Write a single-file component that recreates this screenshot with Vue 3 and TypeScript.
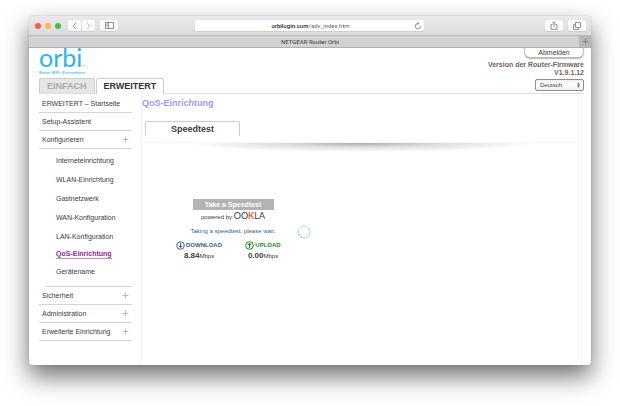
<script setup lang="ts">
import { ref } from 'vue'

interface MenuItem {
  label: string
  expandable?: boolean
}

const topItems: MenuItem[] = [
  { label: 'ERWEITERT – Startseite' },
  { label: 'Setup-Assistent' },
  { label: 'Konfigurieren', expandable: true },
]
const subItems: string[] = [
  'Interneteinrichtung',
  'WLAN-Einrichtung',
  'Gastnetzwerk',
  'WAN-Konfiguration',
  'LAN-Konfiguration',
  'QoS-Einrichtung',
  'Gerätename',
]
const bottomItems: MenuItem[] = [
  { label: 'Sicherheit', expandable: true },
  { label: 'Administration', expandable: true },
  { label: 'Erweiterte Einrichtung', expandable: true },
]
const activeSub = ref('QoS-Einrichtung')
const language = ref('Deutsch')

const dots = Array.from({ length: 12 }, (_, i) => {
  const a = (i / 12) * Math.PI * 2
  return { x: 7 + 5.7 * Math.cos(a), y: 7 + 5.7 * Math.sin(a), o: 0.4 + ((i + 5) % 12) / 20 }
})
</script>

<template>
  <div class="desktop">
    <div class="window">
      <header class="toolbar">
        <div class="lights"><i class="red"></i><i class="yellow"></i><i class="green"></i></div>
        <div class="nav">
          <button class="tool back" aria-label="Zurück">
            <svg width="5" height="8" viewBox="0 0 5 8"><path d="M4 1 1 4l3 3" /></svg>
          </button>
          <button class="tool forward" aria-label="Vorwärts">
            <svg width="5" height="8" viewBox="0 0 5 8"><path d="m1 1 3 3-3 3" /></svg>
          </button>
        </div>
        <button class="tool wide" aria-label="Seitenleiste">
          <svg width="9" height="7" viewBox="0 0 9 7"><path d="M.5.5h8v6h-8zM3.5.5v6M1.4 2h1.2M1.4 3.5h1.2" /></svg>
        </button>
        <div class="address">
          <span class="url"><b>orbilogin.com</b>/adv_index.htm</span>
          <button class="reload" aria-label="Neu laden">
            <svg width="8" height="8" viewBox="0 0 8 8"><path d="M6.6 4.2A2.7 2.7 0 1 1 4 1.5h.8M3.6.2l1.4 1.3-1.4 1.3" /></svg>
          </button>
        </div>
        <div class="actions">
          <button class="tool wide" aria-label="Teilen">
            <svg width="8" height="9" viewBox="0 0 8 9"><path d="M2.6 3.5H1v4.8h6V3.5H5.4M4 6V.8M2.4 2.3 4 .7l1.6 1.6" /></svg>
          </button>
          <button class="tool wide" aria-label="Tabs">
            <svg width="8" height="8" viewBox="0 0 8 8"><path d="M2.5.5h5v5h-5zM2.5 2.5h-2v5h5v-2" /></svg>
          </button>
        </div>
      </header>
      <div class="tabbar">
        <span class="tab-title">NETGEAR Router Orbi</span>
        <button class="new-tab" aria-label="Neuer Tab">
          <svg width="7" height="7" viewBox="0 0 7 7"><path d="M3.5.5v6M.5 3.5h6" /></svg>
        </button>
      </div>

      <div class="page">
        <div class="masthead">
          <div class="brand">
            <div class="logo">orbi<small>™</small></div>
            <div class="tagline">Better WiFi. Everywhere.</div>
          </div>
          <div class="account">
            <button class="logout">Abmelden</button>
            <div class="firmware">Version der Router-Firmware<br />V1.9.1.12</div>
          </div>
        </div>
        <div class="tabs-row">
          <nav class="tabs">
            <a href="#einfach" class="tab">EINFACH</a>
            <a href="#erweitert" class="tab current">ERWEITERT</a>
          </nav>
          <div class="language">
            <select v-model="language" aria-label="Sprache">
              <option>Deutsch</option>
            </select>
            <svg width="3" height="6" viewBox="0 0 4 7"><path d="M2 0 4 3H0zM2 7 0 4h4z" /></svg>
          </div>
        </div>

        <div class="body">
          <nav class="sidebar">
            <a v-for="item in topItems" :key="item.label" href="#" class="entry">
              {{ item.label }}
              <svg v-if="item.expandable" width="7" height="7" viewBox="0 0 7 7"><path d="M3.5.5v6M.5 3.5h6" /></svg>
            </a>
            <div class="submenu">
              <a
                v-for="label in subItems"
                :key="label"
                href="#"
                class="sub"
                :class="{ active: label === activeSub }"
                @click.prevent="activeSub = label"
              >{{ label }}</a>
            </div>
            <a v-for="item in bottomItems" :key="item.label" href="#" class="entry">
              {{ item.label }}
              <svg v-if="item.expandable" width="7" height="7" viewBox="0 0 7 7"><path d="M3.5.5v6M.5 3.5h6" /></svg>
            </a>
          </nav>

          <main class="content">
            <h1>QoS-Einrichtung</h1>
            <h2 class="section-tab">Speedtest</h2>
            <div class="shade"></div>
            <section class="speedtest">
              <button class="start">Take a Speedtest</button>
              <div class="powered">powered by <span class="ookla">OO<em>K</em>LA</span></div>
              <p class="status">Taking a speedtest, please wait.</p>
              <svg class="spinner" width="14" height="14" viewBox="0 0 14 14">
                <circle v-for="(d, i) in dots" :key="i" :cx="d.x" :cy="d.y" r="0.8" :opacity="d.o" />
              </svg>
              <div class="result download">
                <div class="kind">
                  <svg width="9" height="9" viewBox="0 0 9 9"><circle cx="4.5" cy="4.5" r="3.8" /><path d="M4.5 2v4.5M2.6 4.7l1.9 2 1.9-2" /></svg>
                  DOWNLOAD
                </div>
                <div class="value"><b>8.84</b>Mbps</div>
              </div>
              <div class="result upload">
                <div class="kind">
                  <svg width="9" height="9" viewBox="0 0 9 9"><circle cx="4.5" cy="4.5" r="3.8" /><path d="M4.5 7V2.5M2.6 4.3l1.9-2 1.9 2" /></svg>
                  UPLOAD
                </div>
                <div class="value"><b>0.00</b>Mbps</div>
              </div>
            </section>
          </main>
        </div>
      </div>
    </div>
  </div>
</template>

<style>
body {
  background: #fff;
}
</style>

<style scoped>
* {
  box-sizing: border-box;
}
.desktop {
  display: flex;
  min-height: 100vh;
  padding: 16px 29px 41px;
  font-family: 'Liberation Sans', Arial, sans-serif;
  font-size: 7px;
  color: #3c3c3c;
  overflow: hidden;
}
button,
select {
  font: inherit;
  color: inherit;
  margin: 0;
  padding: 0;
  border: 0;
}
a {
  color: inherit;
  text-decoration: none;
}
svg {
  display: block;
  fill: none;
  stroke: #777;
  stroke-width: 0.8;
}
.window {
  flex: 1;
  display: flex;
  flex-direction: column;
  min-width: 0;
  border-radius: 3px;
  overflow: hidden;
  background: #fff;
  box-shadow: 0 0 1px rgba(0, 0, 0, 0.4), 0 11px 24px rgba(0, 0, 0, 0.58);
}
.toolbar {
  display: flex;
  align-items: center;
  height: 20px;
  padding: 0 5px 0 6px;
  background: linear-gradient(#ebe9eb, #dcdadc);
  border-bottom: 1px solid #bbb9bb;
}
.lights {
  display: flex;
  gap: 4px;
}
.lights i {
  width: 6px;
  height: 6px;
  border-radius: 50%;
}
.red {
  background: #fc5753;
}
.yellow {
  background: #fdbc40;
}
.green {
  background: #34c84a;
}
.nav {
  display: flex;
  gap: 1px;
  margin: 0 5px 0 7px;
}
.tool {
  display: flex;
  align-items: center;
  justify-content: center;
  width: 13px;
  height: 11px;
  border-radius: 2px;
  background: #fbfbfb;
  box-shadow: 0 1px 0 #cfcdcf;
}
.tool.wide {
  width: 18px;
}
.forward svg {
  stroke: #bbb;
}
.address {
  flex: 1;
  display: flex;
  align-items: center;
  height: 11px;
  margin: 0 121px 0 77px;
  padding: 0 2px 0 12px;
  border-radius: 2px;
  background: #fff;
  box-shadow: 0 1px 0 #cfcdcf;
  font-family: Roboto, sans-serif;
  font-size: 6px;
  color: #666;
}
.url {
  flex: 1;
  text-align: center;
}
.url b {
  font-weight: 500;
  color: #222;
}
.reload {
  background: none;
}
.actions {
  display: flex;
  gap: 5px;
}
.tabbar {
  display: flex;
  height: 12px;
  padding-left: 12px;
  background: #d3d1d3;
  border-bottom: 1px solid #b0aeb0;
  font-family: Roboto, sans-serif;
  font-size: 6px;
  line-height: 12px;
}
.tab-title {
  flex: 1;
  text-align: center;
}
.new-tab {
  display: flex;
  align-items: center;
  justify-content: center;
  width: 12px;
  background: #b9b7b9;
}
.page {
  flex: 1;
  display: flex;
  flex-direction: column;
}
.masthead {
  display: flex;
  justify-content: space-between;
  height: 30px;
  padding: 0 7px 0 10px;
}
.logo {
  height: 22px;
  font-family: Lato, sans-serif;
  font-size: 25px;
  line-height: 18px;
  color: #28b4ea;
}
.logo small {
  font-size: 3px;
  line-height: 0;
}
.tagline {
  font-size: 4px;
  line-height: 5px;
  font-weight: bold;
  color: #58c4ec;
}
.account {
  display: flex;
  flex-direction: column;
  align-items: flex-end;
}
.logout {
  width: 58px;
  height: 9px;
  margin: 0 1px 4px 0;
  border-radius: 0 0 5px 5px;
  background: #fff;
  box-shadow: 0 1px 1px 1px #bbb;
  line-height: 8px;
}
.firmware {
  font-weight: bold;
  line-height: 8px;
  text-align: right;
  color: #75615c;
}
.tabs-row {
  display: flex;
  justify-content: space-between;
  height: 16px;
  margin: 0 7px 0 10px;
  border-bottom: 1px solid #ddd;
}
.tabs {
  display: flex;
  gap: 1px;
}
.tab {
  height: 15px;
  padding: 0 7px;
  border: 1px solid #ccc;
  border-bottom: 0;
  border-radius: 2px 2px 0 0;
  background: #e6e6e6;
  color: #aaa;
  font-size: 9px;
  font-weight: bold;
  line-height: 14px;
}
.tab.current {
  height: 16px;
  background: #fff;
  color: #333;
}
.language {
  display: flex;
  align-items: center;
  width: 49px;
  height: 12px;
  margin-top: 1px;
  padding-right: 3px;
  border: 1px solid #9a8a88;
  border-radius: 2px;
  background: linear-gradient(#eee, #fff 40%, #eee);
}
.language select {
  flex: 1;
  min-width: 0;
  height: 10px;
  padding-left: 4px;
  appearance: none;
  background: none;
  font-size: 6px;
  line-height: 10px;
}
.language svg {
  fill: #666;
  stroke: none;
}
.body {
  flex: 1;
  display: flex;
  padding-right: 9px;
}
.sidebar {
  width: 113px;
  padding: 1px 9px 0 10px;
  border-right: 1px solid #f2f2f2;
}
.entry {
  display: flex;
  align-items: center;
  justify-content: space-between;
  height: 18px;
  padding: 0 3px;
  border-bottom: 1px solid #d4d4d4;
}
.entry svg {
  stroke: #aaa;
}
.submenu {
  display: flex;
  flex-direction: column;
  justify-content: space-between;
  align-items: flex-start;
  height: 138px;
  margin-left: 6px;
  padding: 6px 0 8px 11px;
  border-bottom: 1px solid #d4d4d4;
}
.sub {
  line-height: 12px;
}
.sub.active {
  line-height: 8px;
  font-weight: bold;
  color: #92278f;
  border-bottom: 1px solid #c78bc5;
}
.content {
  flex: 1;
  min-width: 0;
  border-right: 1px solid #f5f5f5;
}
h1 {
  margin: 0;
  padding-top: 4px;
  font-size: 9px;
  line-height: 10px;
  color: #9b98f5;
}
.section-tab {
  width: 95px;
  height: 15px;
  margin: 13px 0 6px 3px;
  border: 1px solid #ccc;
  border-bottom: 0;
  border-radius: 2px 2px 0 0;
  font-size: 9px;
  line-height: 14px;
  text-align: center;
}
.shade {
  height: 10px;
  border-top: 1px solid #f7f7f7;
  background: radial-gradient(ellipse 40% 100% at 50% 0, #aaa, #ddd 45%, #fff 100%);
}
.speedtest {
  display: grid;
  grid-template-columns: 64px 64px 14px;
  justify-items: center;
  margin: 47px 0 0 27px;
}
.start {
  grid-column: 1 / 3;
  width: 81px;
  height: 11px;
  background: #b3b3b3;
  color: #fff;
  font-weight: bold;
}
.powered {
  grid-column: 1 / 3;
  height: 15px;
  font-size: 6px;
  line-height: 11px;
}
.ookla {
  font-family: Lato, sans-serif;
  font-size: 9px;
}
.ookla em {
  font-style: normal;
  font-weight: bold;
  color: #f0642d;
}
.status {
  grid-column: 1 / 3;
  margin: 0;
  font-size: 6px;
  line-height: 12px;
  color: #33628b;
}
.spinner {
  fill: #2a9fd0;
  stroke: none;
}
.result {
  padding-right: 4px;
}
.kind {
  display: flex;
  align-items: center;
  gap: 1px;
  height: 12px;
  font-size: 6px;
  font-weight: bold;
}
.download .kind {
  color: #33628b;
}
.upload .kind {
  color: #168a16;
}
.kind svg {
  stroke: currentColor;
  stroke-width: 1;
}
.value {
  font-size: 6px;
  line-height: 10px;
  text-align: center;
}
.value b {
  font-size: 8px;
}
</style>
